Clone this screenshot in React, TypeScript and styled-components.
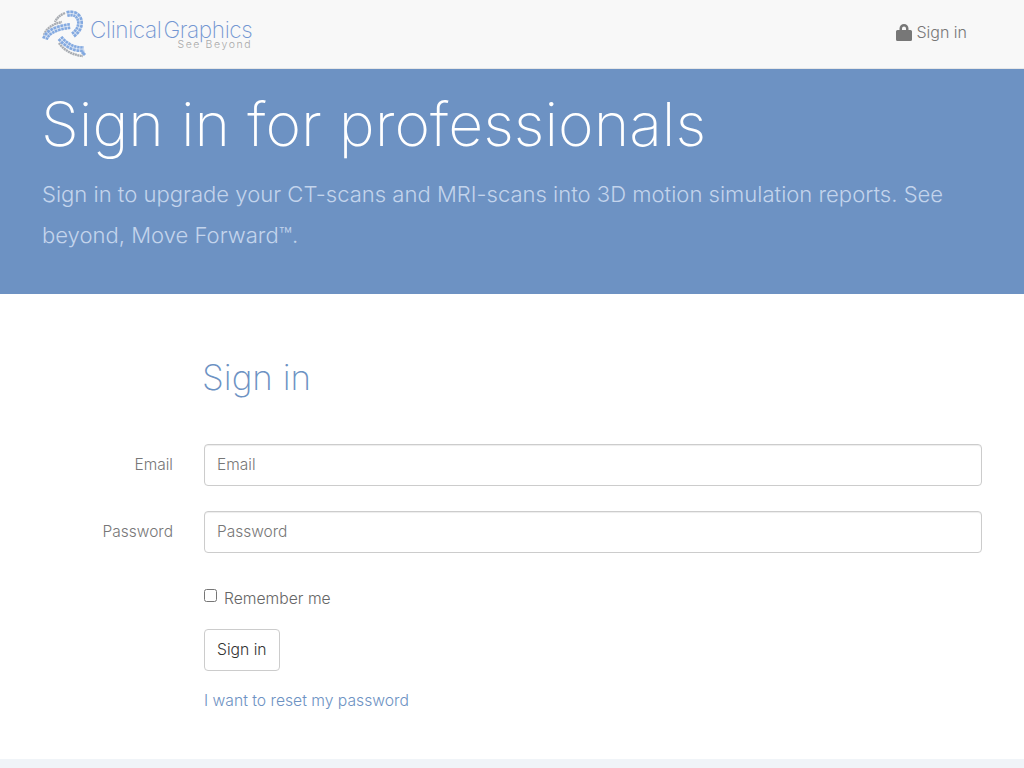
import React from 'react';
import styled, { createGlobalStyle } from 'styled-components';

const sans = `'Inter', 'Liberation Sans', sans-serif`;

const GlobalStyle = createGlobalStyle`
  html, body { margin: 0; padding: 0; background: #fff; }
  body { font-family: ${sans}; font-weight: 300; color: #555; height: 768px; overflow: hidden; }
  * { box-sizing: border-box; }
`;

const bands = [
  'M28 8 C36 6 41 10 41 17 C41 22 38 26 34 29',
  'M6 33 C8 27 15 22 31 20',
  'M21 32 C27 39 35 44 45 43',
];

// three interlocking dotted bands, blue on top of a grey edge
function LogoMark() {
  return (
    <svg width="54" height="54" viewBox="0 0 54 54" fill="none">
      <g stroke="#a8acb2" strokeWidth="2.4" strokeDasharray="2 0.5">
        <path d="M26 7 C21 9 18 12 16 16" />
        <path d="M5 29 C7 23 13 18 23 16" />
        <path d="M20 37 C24 43 32 49 44 50" />
      </g>
      {bands.map((d) => (
        <g key={d}>
          <path d={d} stroke="#c9d9f0" strokeWidth="6" />
          <path d={d} stroke="#83a9e0" strokeWidth="6" strokeDasharray="2.4 1" />
          <path d={d} stroke="#f8f8f8" strokeWidth="0.7" />
        </g>
      ))}
      <path d="M43 46 L46 49" stroke="#83a9e0" strokeWidth="3" />
    </svg>
  );
}

export default function App() {
  return (
    <Page>
      <GlobalStyle />
      <Navbar>
        <Brand>
          <LogoMark />
          <BrandText>
            <BrandName>Clinical Graphics</BrandName>
            <BrandTag>See Beyond</BrandTag>
          </BrandText>
        </Brand>
        <NavLink href="#">
          <svg width="16" height="17" viewBox="0 0 16 17">
            <path d="M3.500 6V4.500a4.500 4.500 0 0 1 9 0V6h2A1.500 1.500 0 0 1 16 7.500v8a1.500 1.500 0 0 1-1.500 1.500h-13A1.500 1.500 0 0 1 0 15.500v-8A1.500 1.500 0 0 1 1.500 6h2zm2.500 0h4V4.500a2 2 0 0 0-4 0V6z" fill="#777" />
          </svg>
          Sign in
        </NavLink>
      </Navbar>
      <Hero>
        <HeroTitle>Sign in for professionals</HeroTitle>
        <HeroText>Sign in to upgrade your CT-scans and MRI-scans into 3D motion simulation reports. See beyond, Move Forward™.</HeroText>
      </Hero>
      <Main>
        <FormTitle>Sign in</FormTitle>
        <FormRow>
          <FieldLabel>Email</FieldLabel>
          <Input type="email" placeholder="Email" />
        </FormRow>
        <FormRow>
          <FieldLabel>Password</FieldLabel>
          <Input type="password" placeholder="Password" />
        </FormRow>
        <Actions>
          <Remember>
            <Check type="checkbox" />
            Remember me
          </Remember>
          <Button type="button">Sign in</Button>
          <ResetLink href="#">I want to reset my password</ResetLink>
        </Actions>
      </Main>
      <Footer />
    </Page>
  );
}

const Page = styled.div`
  display: flex;
  flex-direction: column;
  height: 768px;
`;

const Navbar = styled.nav`
  display: flex;
  align-items: center;
  justify-content: space-between;
  height: 69px;
  padding: 0 57px 0 39px;
  background: #f8f8f8;
  border-bottom: 1px solid #e7e7e7;
`;

const Brand = styled.div`
  display: flex;
  align-items: center;
  margin-top: -2px;
`;

const BrandText = styled.div`
  display: flex;
  flex-direction: column;
  align-items: flex-end;
  margin-top: 2px;
  margin-left: -3px;
`;

const BrandName = styled.span`
  font-size: 22.600px;
  font-weight: 200;
  line-height: 21px;
  letter-spacing: -0.4px;
  color: #7396d2;
  word-spacing: -4px;
`;

const BrandTag = styled.span`
  font-size: 10.500px;
  font-weight: 300;
  line-height: 9px;
  letter-spacing: 1.6px;
  color: #a8a8a8;
`;

const NavLink = styled.a`
  display: flex;
  align-items: center;
  gap: 4px;
  margin-top: -4px;
  font-size: 16px;
  color: #777;
  text-decoration: none;
`;

const Hero = styled.header`
  height: 225px;
  padding: 15px 42px 0 41px;
  background: #6d92c3;
`;

const HeroTitle = styled.h1`
  margin: 0;
  font-size: 60.700px;
  font-weight: 250;
  line-height: 80px;
  color: #fff;
`;

const HeroText = styled.p`
  margin: 10px 0 0 1px;
  font-size: 22.050px;
  font-weight: 300;
  line-height: 41px;
  color: #c3d4ec;
`;

const Main = styled.main`
  flex: 1;
  padding: 55px 42px 0;
`;

const FormTitle = styled.h2`
  margin: 0 0 39px 160px;
  font-size: 35px;
  font-weight: 250;
  line-height: 56px;
  color: #6d92c3;
`;

const FormRow = styled.div`
  display: grid;
  grid-template-columns: 131px 778px;
  column-gap: 31px;
  align-items: center;
  margin-bottom: 25px;
`;

const FieldLabel = styled.label`
  margin-top: -2px;
  text-align: right;
  font-size: 15.500px;
  color: #777;
`;

const Input = styled.input`
  height: 42px;
  padding: 0 12px 2px;
  border: 1px solid #ccc;
  border-radius: 4px;
  font: 300 15.500px ${sans};
  color: #555;
  box-shadow: inset 0 1px 1px rgba(0, 0, 0, 0.075);
  &::placeholder { color: #777; opacity: 1; }
`;

const Actions = styled.div`
  display: flex;
  flex-direction: column;
  align-items: flex-start;
  margin-left: 162px;
`;

const Remember = styled.label`
  display: flex;
  align-items: center;
  gap: 7px;
  height: 24px;
  margin-top: 8px;
  font-size: 15.700px;
  color: #666;
`;

const Check = styled.input`
  width: 13px;
  height: 13px;
  margin: -5px 0 0;
`;

const Button = styled.button`
  height: 42px;
  margin-top: 19px;
  padding: 0 12px 2px;
  background: #fff;
  border: 1px solid #ccc;
  border-radius: 4px;
  font: 300 15.700px ${sans};
  color: #333;
`;

const ResetLink = styled.a`
  margin-top: 18px;
  font-size: 15.700px;
  line-height: 23px;
  color: #6d92c3;
  text-decoration: none;
`;

const Footer = styled.footer`
  height: 9px;
  background: #f0f4f8;
`;
